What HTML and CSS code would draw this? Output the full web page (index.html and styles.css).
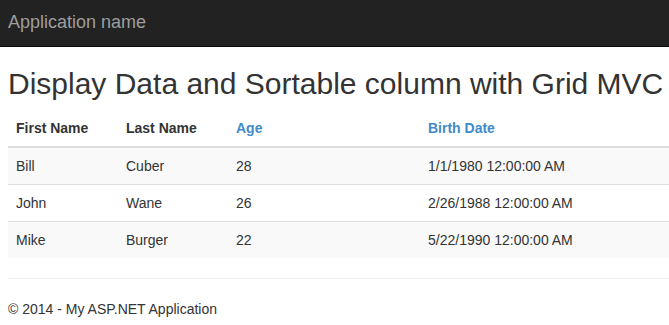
FILE: index.html
```html
<!DOCTYPE html>
<html>
<head>
<meta charset="utf-8">
<title>Grid MVC</title>
<link rel="stylesheet" href="styles.css">
</head>
<body>
<div class="navbar">
  <a class="brand" href="#">Application name</a>
</div>
<div class="content">
  <h2 class="title">Display Data and Sortable column with Grid MVC</h2>
  <table class="grid">
    <thead>
      <tr>
        <th class="c1">First Name</th>
        <th class="c2">Last Name</th>
        <th class="c3 sortable">Age</th>
        <th class="c4 sortable">Birth Date</th>
      </tr>
    </thead>
    <tbody>
      <tr class="odd"><td>Bill</td><td>Cuber</td><td>28</td><td>1/1/1980 12:00:00 AM</td></tr>
      <tr><td>John</td><td>Wane</td><td>26</td><td>2/26/1988 12:00:00 AM</td></tr>
      <tr class="odd"><td>Mike</td><td>Burger</td><td>22</td><td>5/22/1990 12:00:00 AM</td></tr>
    </tbody>
  </table>
  <hr class="rule">
  <footer class="footer">
    <p>&copy; 2014 - My ASP.NET Application</p>
  </footer>
</div>
</body>
</html>
```

FILE: styles.css
```css
html, body {
  margin: 0;
  padding: 0;
  background: #fff;
  font-family: "Liberation Sans", Arial, Helvetica, sans-serif;
  font-size: 14px;
  line-height: 20px;
  color: #333;
  overflow: hidden;
}

.navbar {
  height: 46px;
  background: #222;
  border-bottom: 1px solid #080808;
  display: flex;
  align-items: center;
  padding: 0 8px;
}

.brand {
  font-size: 18px;
  line-height: 20px;
  color: #9d9d9d;
  text-decoration: none;
  margin-top: -2px;
}

.content {
  padding: 0 0 0 8px;
}

.title {
  font-size: 30px;
  font-weight: 500;
  line-height: 33px;
  margin: 20px 0 10px;
  color: #333;
  white-space: nowrap;
}

.grid {
  width: 100%;
  border-collapse: collapse;
  border-spacing: 0;
  margin-bottom: 20px;
}

.grid th,
.grid td {
  padding: 8px;
  line-height: 20px;
  text-align: left;
  vertical-align: top;
}

.grid th {
  font-weight: bold;
  border-bottom: 2px solid #ddd;
  color: #333;
}

.grid th.sortable {
  color: #428bca;
}

.grid td {
  border-top: 1px solid #ddd;
}

.grid tbody tr:first-child td {
  border-top: 0;
}

.grid tr.odd td {
  background: #f9f9f9;
}

.c1 { width: 94px; }
.c2 { width: 94px; }
.c3 { width: 176px; }

.rule {
  margin: 20px 0;
  border: 0;
  border-top: 1px solid #eee;
}

.footer p {
  margin: 0 0 10px;
}
```
